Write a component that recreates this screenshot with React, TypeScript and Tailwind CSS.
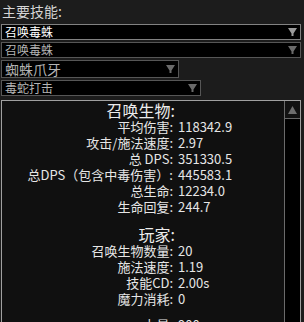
const font = { fontFamily: '"Noto Sans CJK SC", "Noto Sans", sans-serif' };

const DownArrow = ({ color }: { color: string }) => (
    <svg width="9" height="8" viewBox="0 0 9 8" className="shrink-0">
        <path d="M0 0 H9 L5.5 5.5 V8 H3.5 V5.5 Z" fill={color} />
    </svg>
);

type DropProps = {
    label: string;
    width: string;
    height: string;
    border: string;
    text: string;
    size: string;
    arrow: string;
};

const Dropdown = ({ label, width, height, border, text, size, arrow }: DropProps) => (
    <div
        className={`ml-[1px] flex items-center justify-between bg-black border pl-[3px] pr-[3px] ${width} ${height} ${border}`}
    >
        <span className={`${size} ${text} leading-none`}>{label}</span>
        <DownArrow color={arrow} />
    </div>
);

const summon: [string, string][] = [
    ["平均伤害:", "118342.9"],
    ["攻击/施法速度:", "2.97"],
    ["总 DPS:", "351330.5"],
    ["总DPS（包含中毒伤害）:", "445583.1"],
    ["总生命:", "12234.0"],
    ["生命回复:", "244.7"],
];

const player: [string, string][] = [
    ["召唤生物数量:", "20"],
    ["施法速度:", "1.19"],
    ["技能CD:", "2.00s"],
    ["魔力消耗:", "0"],
];

const Header = ({ title }: { title: string }) => (
    <div className="grid grid-cols-[173px_1fr] h-[18px] items-center">
        <span className="text-right text-[16px] leading-[18px] text-[#ececec]">{title}</span>
        <span />
    </div>
);

const Row = ({ label, value }: { label: string; value: string }) => (
    <div className="grid grid-cols-[171px_1fr] h-[16px] items-center text-[13px] leading-[16px] text-[#e6e6e6]">
        <span className="text-right whitespace-nowrap">{label}</span>
        <span className="pl-[5px]">{value}</span>
    </div>
);

export default function App() {
    return (
        <div className="w-[304px] h-[322px] overflow-hidden bg-[#1c1c1c]" style={font}>
            <div className="ml-[2px] pt-[2px] h-[20px] text-[14px] leading-[18px] text-[#d4d4d4]">
                主要技能:
            </div>
            <div className="mt-[4px] flex flex-col gap-[2px]">
                <Dropdown
                    label="召唤毒蛛"
                    width="w-[300px]"
                    height="h-[16px]"
                    border="border-[#828282]"
                    text="text-white"
                    size="text-[12px]"
                    arrow="#9a9a9a"
                />
                <Dropdown
                    label="召唤毒蛛"
                    width="w-[300px]"
                    height="h-[16px]"
                    border="border-[#565656]"
                    text="text-[#b4b4b4]"
                    size="text-[12px]"
                    arrow="#6a6a6a"
                />
                <Dropdown
                    label="蜘蛛爪牙"
                    width="w-[178px]"
                    height="h-[18px]"
                    border="border-[#565656]"
                    text="text-[#b4b4b4]"
                    size="text-[14px]"
                    arrow="#6a6a6a"
                />
                <Dropdown
                    label="毒蛇打击"
                    width="w-[200px]"
                    height="h-[16px]"
                    border="border-[#565656]"
                    text="text-[#b4b4b4]"
                    size="text-[12px]"
                    arrow="#6a6a6a"
                />
            </div>
            <div className="mt-[4px] ml-[1px] w-[300px] h-[240px] flex border border-[#a0a0a0] bg-[#101010]">
                <div className="flex-1 flex flex-col">
                    <Header title="召唤生物:" />
                    {summon.map(([l, v]) => (
                        <Row key={l} label={l} value={v} />
                    ))}
                    <div className="h-[10px]" />
                    <Header title="玩家:" />
                    {player.map(([l, v]) => (
                        <Row key={l} label={l} value={v} />
                    ))}
                    <div className="h-[10px]" />
                    <Row label="力量:" value="900" />
                </div>
                <div className="w-[16px] flex flex-col border-l border-[#6a6a6a] bg-black">
                    <div className="h-[18px] flex items-center justify-center border-b border-[#666666] bg-[#111111]">
                        <svg width="9" height="8" viewBox="0 0 9 8">
                            <path d="M4.5 0 L9 8 H0 Z" fill="#6e6e6e" />
                        </svg>
                    </div>
                </div>
            </div>
        </div>
    );
}
